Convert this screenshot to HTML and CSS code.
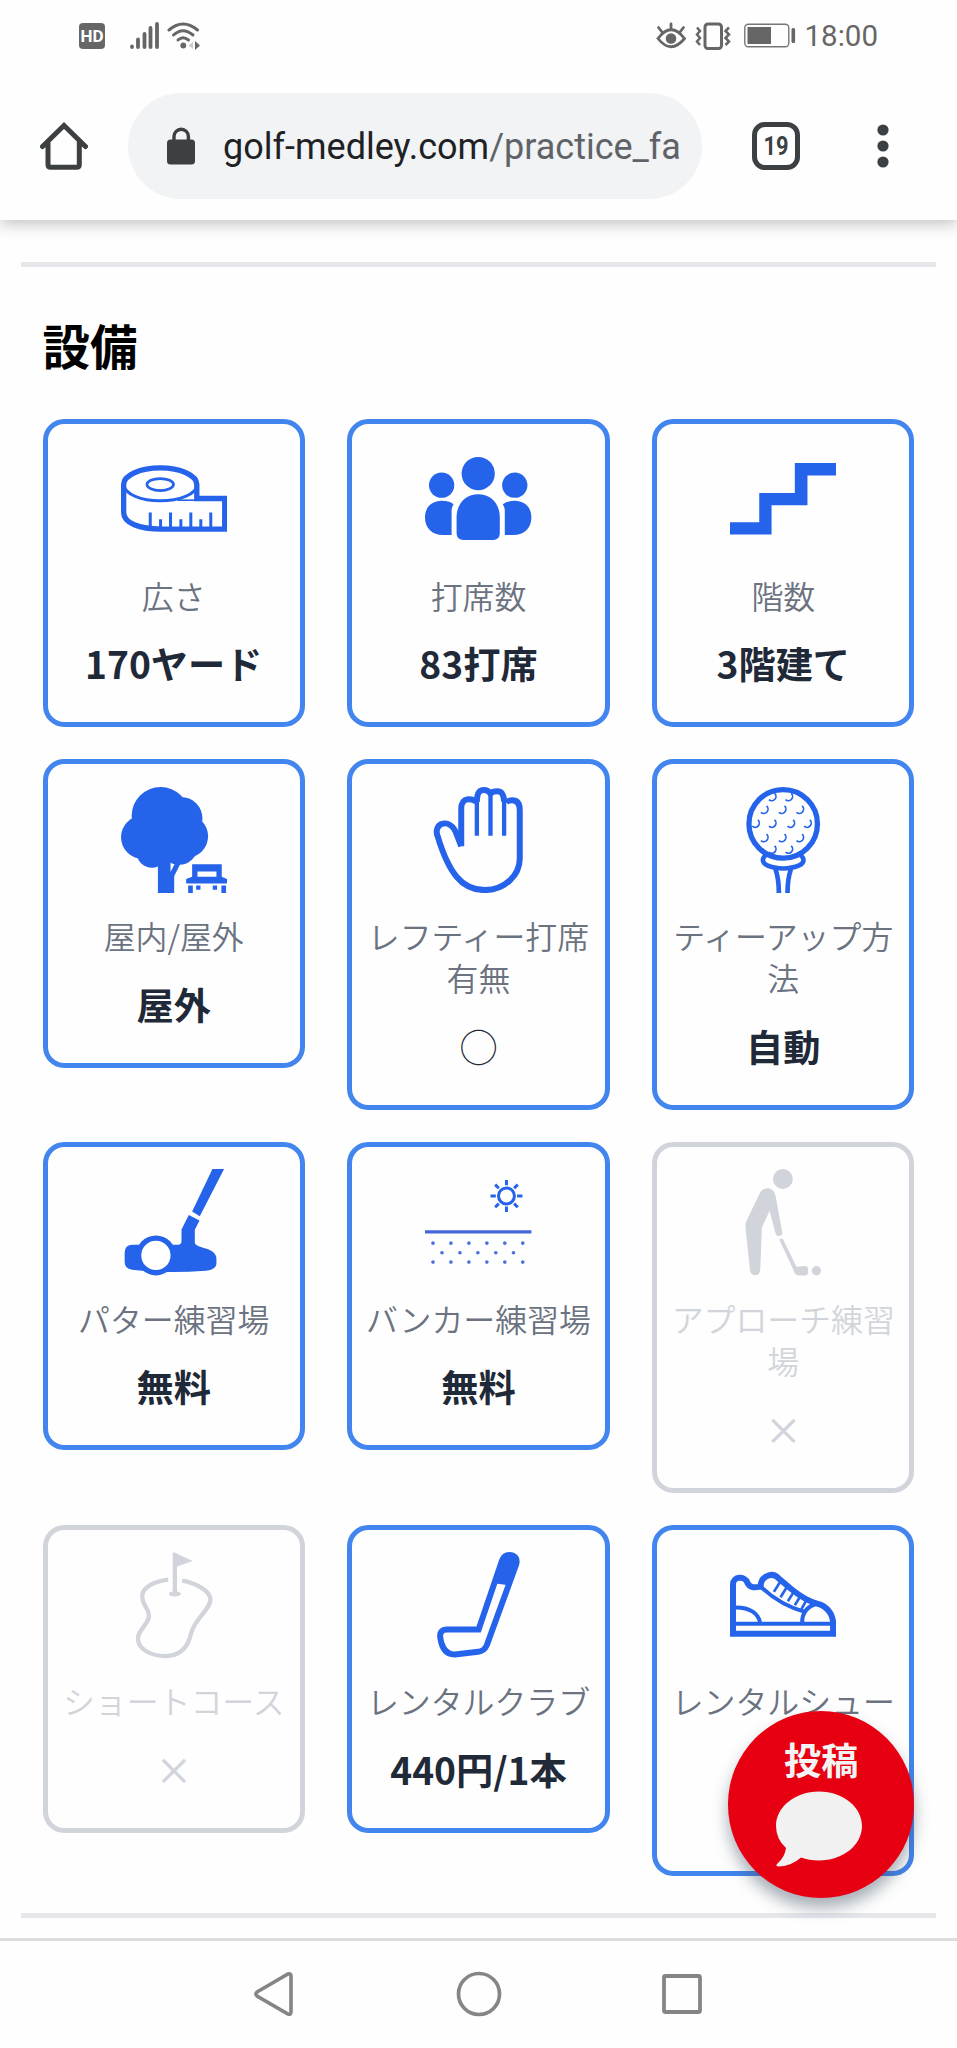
FILE: index.html
```html
<!DOCTYPE html>
<html lang="ja">
<head>
<meta charset="utf-8">
<title>設備</title>
<link rel="stylesheet" href="styles.css">
</head>
<body>
<header class="chrome">
  <div class="status">
    <div class="status-left">
      <span class="hd">HD</span>
      <svg class="signal" viewBox="0 0 29 28" width="29" height="28"><path d="M2 24.500v.5M8 17.500V25M14.500 12V25M20.500 6V25M27 2V25" fill="none" stroke="#666" stroke-width="3.800" stroke-linecap="round"/></svg>
      <svg class="wifi" viewBox="0 0 34 28" width="34" height="28"><g fill="none" stroke="#666" stroke-width="3" stroke-linecap="round"><path d="M2 8Q16 -4 30.500 8"/><path d="M6.500 13Q16 4.500 26 13"/><path d="M11 18Q16 13.500 21.500 18"/></g><circle cx="16.300" cy="23.500" r="2.900" fill="#666"/><path d="M26 20v7l-4.500-3.500z" fill="#ccc"/><path d="M28 19l5 4.500-5 4.500z" fill="#666"/></svg>
    </div>
    <div class="status-right">
      <svg class="eye" viewBox="0 0 30 28" width="30" height="28"><g fill="none" stroke="#666" stroke-width="2.800" stroke-linecap="round"><path d="M2 16.500Q15 -1 28.500 16.500Q15 33 2 16.500Z"/><path d="M15 7V2M6 10L2.500 5.500M24 10l3.500-4.500"/></g><circle cx="15" cy="16.500" r="5.300" fill="#666"/></svg>
      <svg class="vibrate" viewBox="0 0 36 28" width="36" height="28"><rect x="10" y="2" width="16.500" height="24.500" rx="3" fill="none" stroke="#666" stroke-width="3"/><path d="M2 5.500l3 3.500-3 3.500 3 3.500-3 3.500 3 3.500M34 5.500l-3.500 3.500 3.500 3.500-3.500 3.500 3.500 3.500-3.500 3.500" fill="none" stroke="#666" stroke-width="2.500"/></svg>
      <svg class="battery" viewBox="0 0 52 26" width="52" height="26"><rect x=".8" y="1.300" width="44" height="22.500" rx="3.500" fill="none" stroke="#777" stroke-width="1.400"/><rect x="3.500" y="4" width="23.500" height="17" fill="#666"/><rect x="47.500" y="5" width="3.600" height="15" rx="1.500" fill="#666"/></svg>
      <span class="time">18:00</span>
    </div>
  </div>
  <div class="toolbar">
    <svg class="home" viewBox="0 0 48 48" width="48" height="48"><path d="M2.500 24.500L24 3.500l21.500 21M8 20V42.500Q8 45.300 10.800 45.300H36.500Q39.300 45.300 39.300 42.500V20" fill="none" stroke="#3c4043" stroke-width="5" stroke-linecap="round" stroke-linejoin="miter"/></svg>
    <div class="omnibox">
      <svg class="lock" viewBox="0 0 28 38" width="28" height="38"><rect y="12.500" width="28" height="25" rx="3.500" fill="#3c4043"/><path d="M7 14V9.500a7.200 7.200 0 0 1 14.400 0V14" fill="none" stroke="#3c4043" stroke-width="3.400"/></svg>
      <span class="url"><span class="host">golf-medley.com</span>/practice_fa</span>
    </div>
    <div class="tabs"><span class="tab-count">19</span></div>
    <svg class="more" viewBox="0 0 12 44" width="12" height="44"><g fill="#3c4043"><circle cx="6" cy="6" r="5.600"/><circle cx="6" cy="22" r="5.600"/><circle cx="6" cy="38" r="5.600"/></g></svg>
  </div>
</header>

<main class="page">
  <hr class="rule">
  <section class="facilities">
    <h2 class="title">設備</h2>
    <div class="grid">
      <article class="card">
        <svg class="icon" viewBox="0 0 320 320" fill="none" stroke="currentColor"><path d="M8 116C8 88 58 66 118 66S228 88 228 116V158H312V250H122C55 250 8 232 8 200Z" stroke-width="16"/><path d="M9 118C12 145 60 165 118 165S226 145 229 118" stroke-width="9"/><ellipse cx="118" cy="116" rx="40" ry="18" stroke-width="8"/><path d="M170 163H225" stroke-width="5"/><path d="M88 200V246M149 200V246M210 200V246M270 200V246M119 220V246M180 220V246M240 220V246" stroke-width="9"/></svg>
        <p class="label">広さ</p>
        <p class="value">170ヤード</p>
      </article>
      <article class="card">
        <svg class="icon" viewBox="0 0 320 320" fill="currentColor"><circle cx="160" cy="83" r="50"/><circle cx="50" cy="118" r="38"/><circle cx="270" cy="118" r="38"/><path d="M95 215C95 170 125 145 160 145S225 170 225 215V262Q225 283 204 283H116Q95 283 95 262Z"/><path d="M80 268H55C20 268 0 245 0 215C0 185 20 165 50 165C65 165 76 168 86 175Q79 185 80 200Z"/><path d="M240 268H265C300 268 320 245 320 215C320 185 300 165 270 165C255 165 244 168 234 175Q241 185 240 200Z"/></svg>
        <p class="label">打席数</p>
        <p class="value">83打席</p>
      </article>
      <article class="card">
        <svg class="icon" viewBox="0 0 320 320" fill="currentColor"><path d="M0 229H88V141H195V51H320V89H233V178H125V266H0Z"/></svg>
        <p class="label">階数</p>
        <p class="value">3階建て</p>
      </article>

      <article class="card">
        <svg class="icon" viewBox="0 0 320 320" fill="currentColor"><circle cx="119" cy="87" r="87"/><circle cx="180" cy="95" r="65"/><circle cx="65" cy="151" r="65"/><circle cx="197" cy="148" r="65"/><circle cx="175" cy="178" r="56"/><circle cx="93" cy="197" r="46"/><path d="M60 100H200V225H100Z"/><path d="M111 210H149V256L165 225L178 232L160 268V320H111Z"/><path d="M214 232H303V270L320 277V290H196V277L214 270ZM230 254V270H287V254Z" fill-rule="evenodd"/><path d="M202 296h14v24h-14zM302 296h14v24h-14zM226 296h13v13h-13zM276 296h13v13h-13z"/></svg>
        <p class="label">屋内/屋外</p>
        <p class="value">屋外</p>
      </article>
      <article class="card">
        <svg class="icon" viewBox="0 0 320 320" fill="none" stroke="currentColor" stroke-width="18" stroke-linejoin="round"><path d="M109 178L92 134C80 110 62 106 48 112C36 118 32 134 38 148C52 195 70 240 95 270C118 298 145 310 180 310C240 310 285 265 285 215V70C285 50 277 40 262 40Q250 40 244 46"/><path d="M109 178V64C109 48 117 37 132 37Q146 37 154 44M156 45C156 18 163 9 177 9Q190 9 197 20Q203 13 217 13C232 13 237 24 238 44"/><path d="M156 38V147M197 18V147M238 38V147" stroke-width="13"/></svg>
        <p class="label">レフティー打席有無</p>
        <p class="value mark">◯</p>
      </article>
      <article class="card">
        <svg class="icon" viewBox="0 0 320 320" fill="none" stroke="currentColor" stroke-width="14"><defs><path id="dimple" d="M4 -12A12 12 0 1 1 -13 7"/></defs><circle cx="160" cy="111" r="103" stroke-width="16"/><g stroke-width="5"><use href="#dimple" x="130" y="31"/><use href="#dimple" x="180" y="31"/><use href="#dimple" x="106" y="69"/><use href="#dimple" x="160" y="69"/><use href="#dimple" x="213" y="69"/><use href="#dimple" x="80" y="111"/><use href="#dimple" x="130" y="111"/><use href="#dimple" x="186" y="111"/><use href="#dimple" x="236" y="111"/><use href="#dimple" x="106" y="154"/><use href="#dimple" x="160" y="154"/><use href="#dimple" x="213" y="154"/><use href="#dimple" x="130" y="189"/><use href="#dimple" x="180" y="189"/></g><path d="M107 206C94 216 98 230 112 236C140 248 180 248 208 236C222 230 226 216 213 206M137 248C145 270 147 290 147 320M183 248C175 270 173 290 173 320"/></svg>
        <p class="label">ティーアップ方法</p>
        <p class="value">自動</p>
      </article>

      <article class="card">
        <svg class="icon" viewBox="0 0 320 320" fill="currentColor"><path d="M275 0H310L237 142L214 128Z"/><path d="M11 252Q11 228 35 228H172Q182 228 182 215V182L204 138L236 155L222 183V222Q222 232 262 241Q287 250 287 270V285Q287 303 255 306Q180 312 105 309Q60 306 33 303Q11 300 11 280Z"/><circle cx="105" cy="260" r="60"/><circle cx="105" cy="260" r="44" fill="#fff"/></svg>
        <p class="label">パター練習場</p>
        <p class="value">無料</p>
      </article>
      <article class="card">
        <svg class="icon" viewBox="0 0 320 320" fill="none" stroke="currentColor" stroke-width="9"><path d="M0 189H320" stroke="#4468d8" stroke-width="10"/><circle cx="245" cy="81" r="24"/><path d="M245 49V33M245 113V129M213 81H197M277 81H293M222 58L211 47M268 58L279 47M222 104L211 115M268 104L279 115"/><path d="M24 223h.1M78 223h.1M132 223h.1M186 223h.1M240 223h.1M294 223h.1M51 252h.1M105 252h.1M159 252h.1M213 252h.1M266 252h.1M24 280h.1M78 280h.1M132 280h.1M186 280h.1M240 280h.1M294 280h.1" stroke="#4a70dd" stroke-width="11" stroke-linecap="round"/></svg>
        <p class="label">バンカー練習場</p>
        <p class="value">無料</p>
      </article>
      <article class="card off">
        <svg class="icon" viewBox="0 0 320 320" fill="currentColor"><circle cx="159" cy="30" r="30"/><path d="M88 76C98 50 132 52 137 80L157 190C160 204 140 206 137 194L119 126L96 176L91 303C90 325 61 325 60 303L47 180Q45 165 50 155Z"/><path d="M148 212L158 208L200 294L226 292Q235 292 235 303V310Q235 320 226 320H205Q196 320 192 306Z"/><circle cx="260" cy="306" r="14"/></svg>
        <p class="label">アプローチ練習場</p>
        <p class="value mark">×</p>
      </article>

      <article class="card off">
        <svg class="icon" viewBox="0 0 320 320" fill="none" stroke="currentColor" stroke-width="13"><path d="M142 83C100 88 64 105 64 133C64 160 84 170 84 193C84 215 51 235 51 260C51 292 90 313 134 313C175 313 195 292 206 262C213 235 216 225 235 200C255 175 269 160 269 143C269 115 220 92 184 86"/><path d="M162 4V126"/><path d="M157 0L216 27L162 46Z" fill="currentColor" stroke="none"/><ellipse cx="162" cy="126" rx="18" ry="8" fill="currentColor" stroke="none"/></svg>
        <p class="label">ショートコース</p>
        <p class="value mark">×</p>
      </article>
      <article class="card">
        <svg class="icon" viewBox="0 0 320 320" fill="none" stroke="currentColor" stroke-width="18"><path d="M168 233H66C48 233 44 245 46 258C50 285 62 309 90 308L160 300Q178 298 186 280L274 38C280 18 268 9 253 9C240 9 236 15 232 25L160 237"/><path d="M232 25C236 12 245 9 253 9C270 9 280 20 274 38L251 100L208 94Z" fill="currentColor" stroke="none"/></svg>
        <p class="label">レンタルクラブ</p>
        <p class="value">440円/1本</p>
      </article>
      <article class="card">
        <svg class="icon" viewBox="0 0 320 320" fill="none" stroke="currentColor" stroke-width="12"><path d="M9 246V98C9 72 45 72 52 92C60 108 72 108 92 104C92 75 125 58 145 78L185 112C210 132 235 148 262 155C295 163 310 190 310 215V246Z" stroke-width="18"/><path d="M9 216H310M18 167C60 167 86 185 90 212M262 155C235 163 217 180 217 212M92 104C130 140 170 165 225 180"/><path d="M152 88L132 120M172 104L152 136M192 120L174 148M211 134L195 160M230 145L215 172" stroke-width="8"/></svg>
        <p class="label two-line">レンタルシュー</p>
        <p class="value"></p>
      </article>
    </div>
  </section>
  <hr class="rule">
  <div class="post">
    <span class="post-text">投稿</span>
    <svg class="bubble" viewBox="0 0 86 76" width="86" height="76"><path d="M43 .5C67 .5 86 16 86 35S67 69.500 43 69.500Q33 69.500 25 66.500Q15 75.500 2 75.500Q-1 75 1.500 72.500Q9 66 10 57Q0 48 0 35C0 16 19 .5 43 .5Z" fill="#f1f1f1"/></svg>
  </div>
</main>

<nav class="navbar">
  <svg class="nav-back" viewBox="0 0 40 46" width="40" height="46"><path d="M3 21L34 3Q37 2 37 5V41Q37 44 34 43L3 25Q1 23 3 21Z" fill="none" stroke="#858585" stroke-width="3.600"/></svg>
  <svg class="nav-home" viewBox="0 0 46 46" width="46" height="46"><circle cx="23" cy="23" r="20.500" fill="none" stroke="#858585" stroke-width="3.700"/></svg>
  <svg class="nav-recent" viewBox="0 0 40 40" width="40" height="40"><rect x="2" y="2" width="36" height="36" rx="1.500" fill="none" stroke="#858585" stroke-width="3.800"/></svg>
</nav>
</body>
</html>
```
FILE: styles.css
```css
* { box-sizing: border-box; }

body {
  margin: 0;
  height: 2048px;
  display: flex;
  flex-direction: column;
  background: #fefefe;
  font-family: "Noto Sans CJK JP", sans-serif;
  overflow: hidden;
}

svg { display: block; flex: none; }
p, h2 { margin: 0; }

/* Browser chrome */
.chrome {
  position: relative;
  z-index: 1;
  height: 220px;
  flex: none;
  background: #fefefe;
  box-shadow: 0 3px 16px rgba(0, 0, 0, .27);
  clip-path: inset(0 0 -40px 0);
  font-family: Roboto, sans-serif;
}
.status {
  height: 72px;
  display: flex;
  justify-content: space-between;
  align-items: center;
  padding: 0 79px 0 79px;
  color: #666;
}
.status-left, .status-right { display: flex; align-items: center; }
.hd {
  width: 26px;
  height: 26px;
  border-radius: 4px;
  background: #666;
  color: #fff;
  font-size: 17px;
  font-weight: 700;
  line-height: 27px;
  text-align: center;
}
.signal { margin-left: 25px; }
.wifi { margin-left: 8px; }
.vibrate { margin-left: 9px; }
.battery { margin-left: 13px; }
.time { margin-left: 9px; font-size: 29.500px; line-height: 36px; }

.toolbar {
  height: 148px;
  display: flex;
  align-items: center;
  padding: 0 68px 0 40px;
}
.omnibox {
  width: 574px;
  height: 106px;
  margin-left: 40px;
  padding-left: 39px;
  border-radius: 53px;
  background: #f1f3f4;
  display: flex;
  align-items: center;
}
.url {
  margin-left: 28px;
  padding-top: 2px;
  font-size: 36px;
  line-height: 48px;
  color: #5f6368;
  white-space: nowrap;
}
.host { color: #202124; }
.tabs {
  width: 48px;
  height: 48px;
  margin-left: 50px;
  border: 5.300px solid #3c4043;
  border-radius: 13px;
  display: flex;
  align-items: center;
  justify-content: center;
}
.tab-count {
  font-size: 26px;
  font-weight: 700;
  line-height: 30px;
  color: #3c4043;
  transform: scaleX(.84);
}
.more { margin-left: auto; }

/* Page */
.page {
  position: relative;
  flex: 1;
  min-height: 0;
  padding: 42px 21.300px 0;
}
.rule {
  height: 5.300px;
  margin: 0;
  border: 0;
  background: #e5e7eb;
}
.facilities { padding: 51px 21.300px 37px; }
.title {
  font-size: 47.500px;
  line-height: 53px;
  font-weight: 700;
  color: #000;
  margin-bottom: 47.700px;
}
.grid {
  display: grid;
  grid-template-columns: repeat(3, 1fr);
  column-gap: 42.500px;
  row-gap: 31.900px;
  align-items: start;
}
.card {
  border: 5.300px solid #4285ee;
  border-radius: 21.300px;
  padding: 22.300px 10.600px 31.800px;
  display: flex;
  flex-direction: column;
  align-items: center;
  text-align: center;
  color: #2563eb;
}
.icon { width: 106.400px; height: 106.400px; margin-bottom: 20.900px; overflow: hidden; }
.label {
  font-size: 31.900px;
  line-height: 42.530px;
  font-weight: 350;
  color: #6b7280;
}
.two-line { min-height: 85.060px; }
.value {
  height: 53.200px;
  margin-top: 21.300px;
  font-size: 37.200px;
  line-height: 53.200px;
  font-weight: 700;
  color: #1f2937;
}
.mark { font-weight: 500; }
.off { border-color: #d1d5db; color: #d1d5db; }
.off .label, .off .value { color: #d1d5db; }

/* Floating post button */
.post {
  position: absolute;
  left: 728.300px;
  top: 1491px;
  width: 186px;
  height: 186.500px;
  padding-top: 22px;
  border-radius: 50%;
  background: #e60012;
  box-shadow: 0 10px 16px rgba(60, 75, 95, .45);
  display: flex;
  flex-direction: column;
  align-items: center;
}
.post-text { font-size: 37.200px; line-height: 53px; font-weight: 700; color: #f3f3f3; }
.bubble { margin: 5px 4px 0 0; }

/* System navigation */
.navbar {
  position: relative;
  height: 110px;
  flex: none;
  border-top: 3px solid #ddd;
  background: #fefefe;
  display: flex;
  align-items: center;
  padding: 0 0 2px 254px;
}
.nav-home { margin-left: 161.500px; }
.nav-recent { margin-left: 160px; }
```
